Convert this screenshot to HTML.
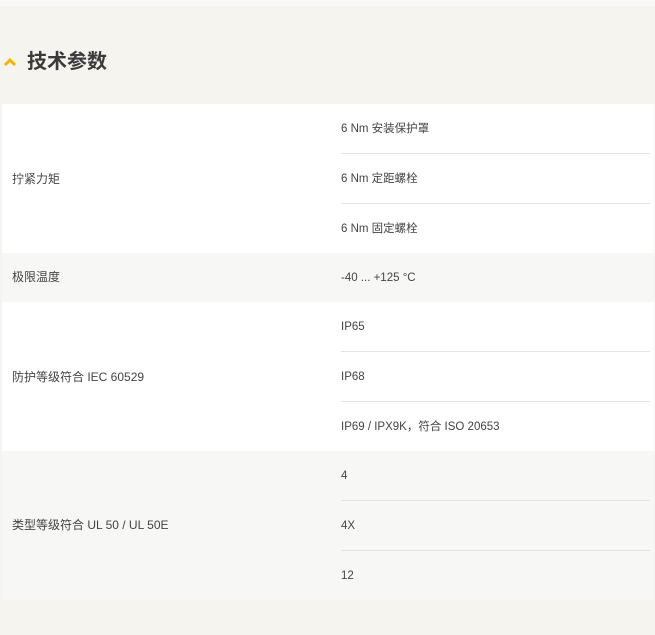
<!DOCTYPE html>
<html><head><meta charset="utf-8"><style>
body{margin:0;width:655px;height:635px;background:#f5f4ef;font-family:"Liberation Sans","Noto Sans CJK SC",sans-serif;color:#444;overflow:hidden;position:relative}
.h{position:absolute;left:27px;top:48px;font-size:20px;font-weight:bold;color:#3a3a3a;line-height:28px}
.chev{position:absolute;left:3px;top:57px}
.row{position:absolute;left:2px;width:652px}
.w{background:#fff}.g{background:#f7f7f5}
.lab{position:absolute;left:10px;font-size:12px;line-height:16px}
.v{position:absolute;left:339px;right:4px;height:50px;font-size:11.5px;line-height:50px;color:#444}
.v.b{border-bottom:1px solid #e3e3e3;height:49px}
.top{position:absolute;left:0;top:0;width:655px;height:6px;background:#f8f8f6}
</style></head><body>
<div class="top"></div>
<svg class="chev" width="14" height="10" viewBox="0 0 14 10"><path d="M2 8 L7 3 L12 8" fill="none" stroke="#f4b400" stroke-width="3"/></svg>
<div class="h">技术参数</div>

<div class="row w" style="top:104px;height:149px">
<div class="lab" style="top:67px">拧紧力矩</div>
<div class="v b" style="top:0">6 Nm 安装保护罩</div>
<div class="v b" style="top:50px">6 Nm 定距螺栓</div>
<div class="v" style="top:100px">6 Nm 固定螺栓</div>
</div>
<div class="row g" style="top:253px;height:49px">
<div class="lab" style="top:16px">极限温度</div>
<div class="v" style="top:0">-40 ... +125 °C</div>
</div>
<div class="row w" style="top:302px;height:149px">
<div class="lab" style="top:67px">防护等级符合 IEC 60529</div>
<div class="v b" style="top:0">IP65</div>
<div class="v b" style="top:50px">IP68</div>
<div class="v" style="top:100px">IP69 / IPX9K，符合 ISO 20653</div>
</div>
<div class="row g" style="top:451px;height:149px">
<div class="lab" style="top:66px">类型等级符合 UL 50 / UL 50E</div>
<div class="v b" style="top:0">4</div>
<div class="v b" style="top:50px">4X</div>
<div class="v" style="top:100px">12</div>
</div>
</body></html>
